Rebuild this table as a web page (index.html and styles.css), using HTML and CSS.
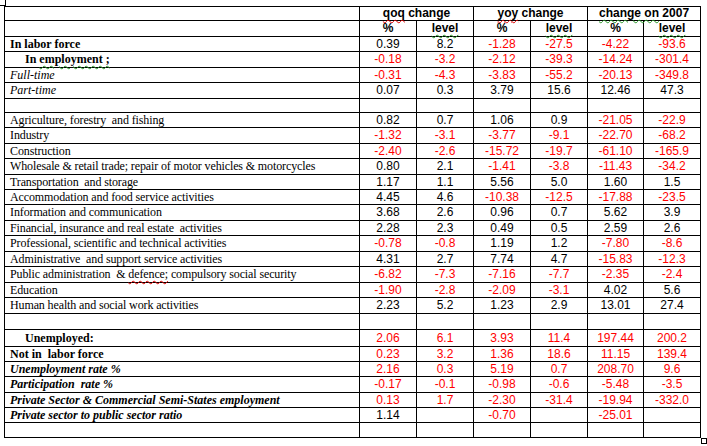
FILE: index.html
```html
<!DOCTYPE html>
<html>
<head>
<meta charset="utf-8">
<link rel="stylesheet" href="styles.css">
</head>
<body>
<div class="page">
<span class="mark-tl"></span>
<table class="data">
<colgroup>
<col class="c-label"><col class="c-num"><col class="c-num"><col class="c-num"><col class="c-num"><col class="c-num5"><col class="c-num">
</colgroup>
<tr class="h14"><td></td><td colspan="2" class="hd"><span class="sp">qoq</span> change</td><td colspan="2" class="hd"><span class="sp">yoy</span> change</td><td colspan="2" class="hd"><span class="gr">change on</span> 2007</td></tr>
<tr class="h16"><td></td><td class="hd">%</td><td class="hd"><span class="gr">level</span></td><td class="hd">%</td><td class="hd"><span class="gr">level</span></td><td class="hd">%</td><td class="hd"><span class="gr">level</span></td></tr>
<tr class="h15"><td class="lb b">In labor force</td><td>0.39</td><td>8.2</td><td class="neg">-1.28</td><td class="neg">-27.5</td><td class="neg">-4.22</td><td class="neg">-93.6</td></tr>
<tr class="h16"><td class="lb b ind">In <span class="gr">employment ;</span></td><td class="neg">-0.18</td><td class="neg">-3.2</td><td class="neg">-2.12</td><td class="neg">-39.3</td><td class="neg">-14.24</td><td class="neg">-301.4</td></tr>
<tr class="h15"><td class="lb i">Full-time</td><td class="neg">-0.31</td><td class="neg">-4.3</td><td class="neg">-3.83</td><td class="neg">-55.2</td><td class="neg">-20.13</td><td class="neg">-349.8</td></tr>
<tr class="h16"><td class="lb i">Part-time</td><td>0.07</td><td>0.3</td><td>3.79</td><td>15.6</td><td>12.46</td><td>47.3</td></tr>
<tr class="h14"><td class="lb"></td><td></td><td></td><td></td><td></td><td></td><td></td></tr>
<tr class="h15"><td class="lb n">Agriculture, forestry&nbsp; and fishing</td><td>0.82</td><td>0.7</td><td>1.06</td><td>0.9</td><td class="neg">-21.05</td><td class="neg">-22.9</td></tr>
<tr class="h16"><td class="lb n">Industry</td><td class="neg">-1.32</td><td class="neg">-3.1</td><td class="neg">-3.77</td><td class="neg">-9.1</td><td class="neg">-22.70</td><td class="neg">-68.2</td></tr>
<tr class="h15"><td class="lb n">Construction</td><td class="neg">-2.40</td><td class="neg">-2.6</td><td class="neg">-15.72</td><td class="neg">-19.7</td><td class="neg">-61.10</td><td class="neg">-165.9</td></tr>
<tr class="h16"><td class="lb n">Wholesale &amp; retail trade; repair of motor vehicles &amp; motorcycles</td><td>0.80</td><td>2.1</td><td class="neg">-1.41</td><td class="neg">-3.8</td><td class="neg">-11.43</td><td class="neg">-34.2</td></tr>
<tr class="h15"><td class="lb n">Transportation&nbsp; and storage</td><td>1.17</td><td>1.1</td><td>5.56</td><td>5.0</td><td>1.60</td><td>1.5</td></tr>
<tr class="h15"><td class="lb n">Accommodation and food service activities</td><td>4.45</td><td>4.6</td><td class="neg">-10.38</td><td class="neg">-12.5</td><td class="neg">-17.88</td><td class="neg">-23.5</td></tr>
<tr class="h16"><td class="lb n">Information and communication</td><td>3.68</td><td>2.6</td><td>0.96</td><td>0.7</td><td>5.62</td><td>3.9</td></tr>
<tr class="h15"><td class="lb n">Financial, insurance and real estate&nbsp; activities</td><td>2.28</td><td>2.3</td><td>0.49</td><td>0.5</td><td>2.59</td><td>2.6</td></tr>
<tr class="h16"><td class="lb n">Professional, scientific and technical activities</td><td class="neg">-0.78</td><td class="neg">-0.8</td><td>1.19</td><td>1.2</td><td class="neg">-7.80</td><td class="neg">-8.6</td></tr>
<tr class="h15"><td class="lb n">Administrative&nbsp; and support service activities</td><td>4.31</td><td>2.7</td><td>7.74</td><td>4.7</td><td class="neg">-15.83</td><td class="neg">-12.3</td></tr>
<tr class="h16"><td class="lb n">Public administration&nbsp; &amp; <span class="sp">defence;</span> compulsory social security</td><td class="neg">-6.82</td><td class="neg">-7.3</td><td class="neg">-7.16</td><td class="neg">-7.7</td><td class="neg">-2.35</td><td class="neg">-2.4</td></tr>
<tr class="h15"><td class="lb n">Education</td><td class="neg">-1.90</td><td class="neg">-2.8</td><td class="neg">-2.09</td><td class="neg">-3.1</td><td>4.02</td><td>5.6</td></tr>
<tr class="h16"><td class="lb n">Human health and social work activities</td><td>2.23</td><td>5.2</td><td>1.23</td><td>2.9</td><td>13.01</td><td>27.4</td></tr>
<tr class="h16"><td class="lb"></td><td></td><td></td><td></td><td></td><td></td><td></td></tr>
<tr class="h17"><td class="lb b ind">Unemployed:</td><td class="neg">2.06</td><td class="neg">6.1</td><td class="neg">3.93</td><td class="neg">11.4</td><td class="neg">197.44</td><td class="neg">200.2</td></tr>
<tr class="h15"><td class="lb b">Not in&nbsp; labor force</td><td class="neg">0.23</td><td class="neg">3.2</td><td class="neg">1.36</td><td class="neg">18.6</td><td class="neg">11.15</td><td class="neg">139.4</td></tr>
<tr class="h15"><td class="lb b i">Unemployment rate %</td><td class="neg">2.16</td><td class="neg">0.3</td><td class="neg">5.19</td><td class="neg">0.7</td><td class="neg">208.70</td><td class="neg">9.6</td></tr>
<tr class="h16"><td class="lb b i">Participation&nbsp; rate %</td><td class="neg">-0.17</td><td class="neg">-0.1</td><td class="neg">-0.98</td><td class="neg">-0.6</td><td class="neg">-5.48</td><td class="neg">-3.5</td></tr>
<tr class="h15"><td class="lb b i">Private Sector &amp; Commercial Semi-States employment</td><td class="neg">0.13</td><td class="neg">1.7</td><td class="neg">-2.30</td><td class="neg">-31.4</td><td class="neg">-19.94</td><td class="neg">-332.0</td></tr>
<tr class="h15"><td class="lb b i">Private sector to public sector ratio</td><td>1.14</td><td></td><td class="neg">-0.70</td><td></td><td class="neg">-25.01</td><td></td></tr>
<tr class="h15"><td class="lb"></td><td></td><td></td><td></td><td></td><td></td><td></td></tr>
</table>
<span class="mark-br"></span>
</div>
</body>
</html>
```
FILE: styles.css
```css
html, body {
  margin: 0;
  padding: 0;
  background: #fff;
}
.page {
  position: relative;
  width: 707px;
  height: 446px;
  padding: 6px 0 0 4px;
  box-sizing: border-box;
}
.mark-tl {
  position: absolute;
  left: 0;
  top: -1px;
  width: 5px;
  height: 5px;
  border-right: 1px solid #000;
  border-bottom: 1px solid #000;
  border-top: 1px solid #000;
}
.mark-br {
  position: absolute;
  left: 701px;
  top: 438px;
  width: 4px;
  height: 4px;
  border: 1px solid #000;
}
.data {
  border-collapse: collapse;
  table-layout: fixed;
  width: 697px;
  font-family: "Liberation Sans", Arial, sans-serif;
  font-size: 12px;
  color: #000;
}
.c-label { width: 355px; }
.c-num { width: 57px; }
.c-num5 { width: 56px; }
.data td {
  border: 1px solid #000;
  padding: 0;
  text-align: center;
  vertical-align: middle;
  white-space: nowrap;
  line-height: 13px;
}
.h14 td { height: 13px; }
.h15 td { height: 14px; }
.h16 td { height: 15px; }
.h17 td { height: 16px; }
.hd { font-weight: bold; }
.data td.lb {
  font-family: "Liberation Serif", "Times New Roman", serif;
  font-size: 12px;
  text-align: left;
  padding-left: 5px;
}
.data td.n { letter-spacing: -0.12px; }
.data td.ind { padding-left: 20px; }
.b { font-weight: bold; }
.i { font-style: italic; }
.neg { color: #ff0000; }
.sp {
  text-decoration: underline wavy #e00000;
  text-decoration-thickness: 1px;
  text-underline-offset: 2px;
}
.gr {
  text-decoration: underline wavy #2a9a2a;
  text-decoration-thickness: 1px;
  text-underline-offset: 2px;
}
```
